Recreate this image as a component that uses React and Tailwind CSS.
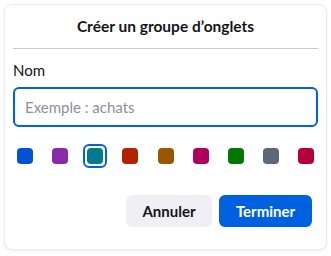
import React from "react";

const colors = [
  "#0054d4",
  "#8a2aa8",
  "#007a90",
  "#b02200",
  "#9a5600",
  "#b0005e",
  "#007800",
  "#5b6878",
  "#b5003a",
];

export default function App() {
  return (
    <div
      className="w-[331px] h-[256px] bg-white p-1"
      style={{ fontFamily: 'Lato, "Open Sans", sans-serif' }}
    >
      <div className="h-[246px] rounded-lg border border-[#ececf0] shadow-[0_1px_3px_rgba(0,0,0,0.08)] bg-white px-2 flex flex-col">
        <div className="h-[44px] flex items-center justify-center border-b border-[#c8c8cc] text-[15.5px] font-bold text-[#15141a]">
          Créer un groupe d’onglets
        </div>
        <div className="mt-[11px] h-[20px] leading-[20px] text-[15px] text-[#15141a]">Nom</div>
        <input
          className="mt-[7px] h-[40px] w-full rounded-md border-2 border-[#0061e0] px-[10px] text-[15px] text-[#15141a] placeholder:text-[#8f8f9d] outline-none"
          placeholder="Exemple : achats"
        />
        <div className="mt-[17px] h-[24px] flex justify-between">
          {colors.map((c, i) => (
            <div
              key={c}
              className={
                i === 2
                  ? "w-[24px] h-[24px] rounded-[6px] border-2 border-[#0061e0] flex items-center justify-center"
                  : "w-[24px] h-[24px] flex items-center justify-center"
              }
            >
              <div className="w-[16px] h-[16px] rounded-[4px]" style={{ backgroundColor: c }} />
            </div>
          ))}
        </div>
        <div className="mt-[27px] flex justify-end gap-[7px] mr-[6px]">
          <button className="h-[32px] w-[86px] rounded-md bg-[#f0f0f4] text-[15px] font-bold text-[#15141a]">
            Annuler
          </button>
          <button className="h-[32px] w-[93px] rounded-md bg-[#0061e0] text-[15px] font-bold text-white">
            Terminer
          </button>
        </div>
      </div>
    </div>
  );
}
